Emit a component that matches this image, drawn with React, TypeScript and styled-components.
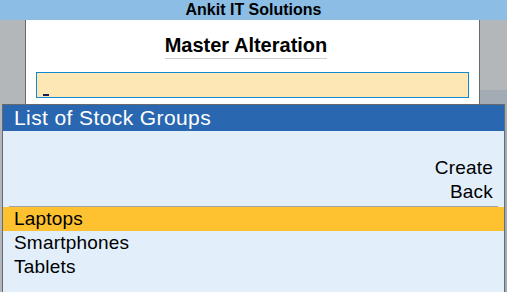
import React from "react";
import styled, { createGlobalStyle } from "styled-components";

const GlobalStyle = createGlobalStyle`
  html, body {
    margin: 0;
    padding: 0;
    background: #b3b7ba;
  }
  body {
    font-family: "Liberation Sans", Arial, sans-serif;
    color: #000;
  }
`;

const Screen = styled.div`
  position: relative;
  width: 507px;
  height: 292px;
  overflow: hidden;
  display: flex;
  flex-direction: column;
  background: #b3b7ba;
`;

const TitleBar = styled.div`
  height: 20px;
  flex: 0 0 20px;
  background: #8bbde5;
  font-weight: bold;
  font-size: 16px;
  line-height: 20px;
  text-align: center;
  color: #000;
`;

const Workspace = styled.div`
  flex: 1;
  display: flex;
`;

const LeftGutter = styled.div`
  width: 25px;
  background: #b3b7ba;
`;

const RightGutter = styled.div`
  flex: 1;
  display: flex;
  flex-direction: column;
`;

const GutterBlock = styled.div<{ $tone: "light" | "dark"; $h?: number }>`
  background: ${(p) => (p.$tone === "light" ? "#b3b7ba" : "#a3acb5")};
  ${(p) => (p.$h ? `height: ${p.$h}px;` : "flex: 1;")}
`;

const Panel = styled.div`
  width: 453px;
  background: #ffffff;
  border-left: 1px solid #666a6e;
  border-right: 1px solid #666a6e;
  display: flex;
  flex-direction: column;
  align-items: stretch;
  padding-top: 13px;
`;

const TitleRow = styled.div`
  display: flex;
  justify-content: center;
  padding-right: 13px;
`;

const Title = styled.div`
  font-weight: bold;
  font-size: 20px;
  line-height: 24px;
  padding-bottom: 1px;
  border-bottom: 1px solid #cfcfcf;
`;

const InputBox = styled.div`
  margin: 13px 10px 0 10px;
  height: 24px;
  border: 1px solid #1388d2;
  background: #fde7b4;
  display: flex;
  align-items: flex-end;
  padding-left: 6px;
`;

const Cursor = styled.span`
  width: 6px;
  height: 2px;
  margin-bottom: 1px;
  background: #1b1b5a;
`;

const Popup = styled.div`
  position: absolute;
  top: 104px;
  left: 2px;
  width: 501px;
  height: 200px;
  border: 1px solid #666a6e;
  background: #e2effb;
`;

const PopupHeader = styled.div`
  height: 26px;
  box-sizing: border-box;
  padding: 1px 0 0 11px;
  background: #2a67b1;
  color: #ffffff;
  font-size: 21px;
  letter-spacing: 0.4px;
  line-height: 24px;
`;

const PopupBody = styled.div`
  padding-top: 25px;
  display: flex;
  flex-direction: column;
`;

const ActionItem = styled.div`
  font-size: 19px;
  letter-spacing: 0.2px;
  line-height: 24px;
  text-align: right;
  padding-right: 11px;
`;

const Separator = styled.div`
  margin: 2px 6px 0 6px;
  height: 1px;
  background: #a3a3a3;
`;

const ListItem = styled.div<{ $selected?: boolean }>`
  font-size: 19px;
  letter-spacing: 0.2px;
  line-height: 24px;
  padding-left: 11px;
  background: ${(p) => (p.$selected ? "#fec230" : "transparent")};
`;

const groups = ["Laptops", "Smartphones", "Tablets"];

export default function App() {
  return (
    <>
      <GlobalStyle />
      <Screen>
        <TitleBar>Ankit IT Solutions</TitleBar>
        <Workspace>
          <LeftGutter />
          <Panel>
            <TitleRow>
              <Title>Master Alteration</Title>
            </TitleRow>
            <InputBox>
              <Cursor />
            </InputBox>
          </Panel>
          <RightGutter>
            <GutterBlock $tone="light" $h={70} />
            <GutterBlock $tone="dark" />
          </RightGutter>
        </Workspace>
        <Popup>
          <PopupHeader>List of Stock Groups</PopupHeader>
          <PopupBody>
            <ActionItem>Create</ActionItem>
            <ActionItem>Back</ActionItem>
            <Separator />
            {groups.map((g, i) => (
              <ListItem key={g} $selected={i === 0}>
                {g}
              </ListItem>
            ))}
          </PopupBody>
        </Popup>
      </Screen>
    </>
  );
}
